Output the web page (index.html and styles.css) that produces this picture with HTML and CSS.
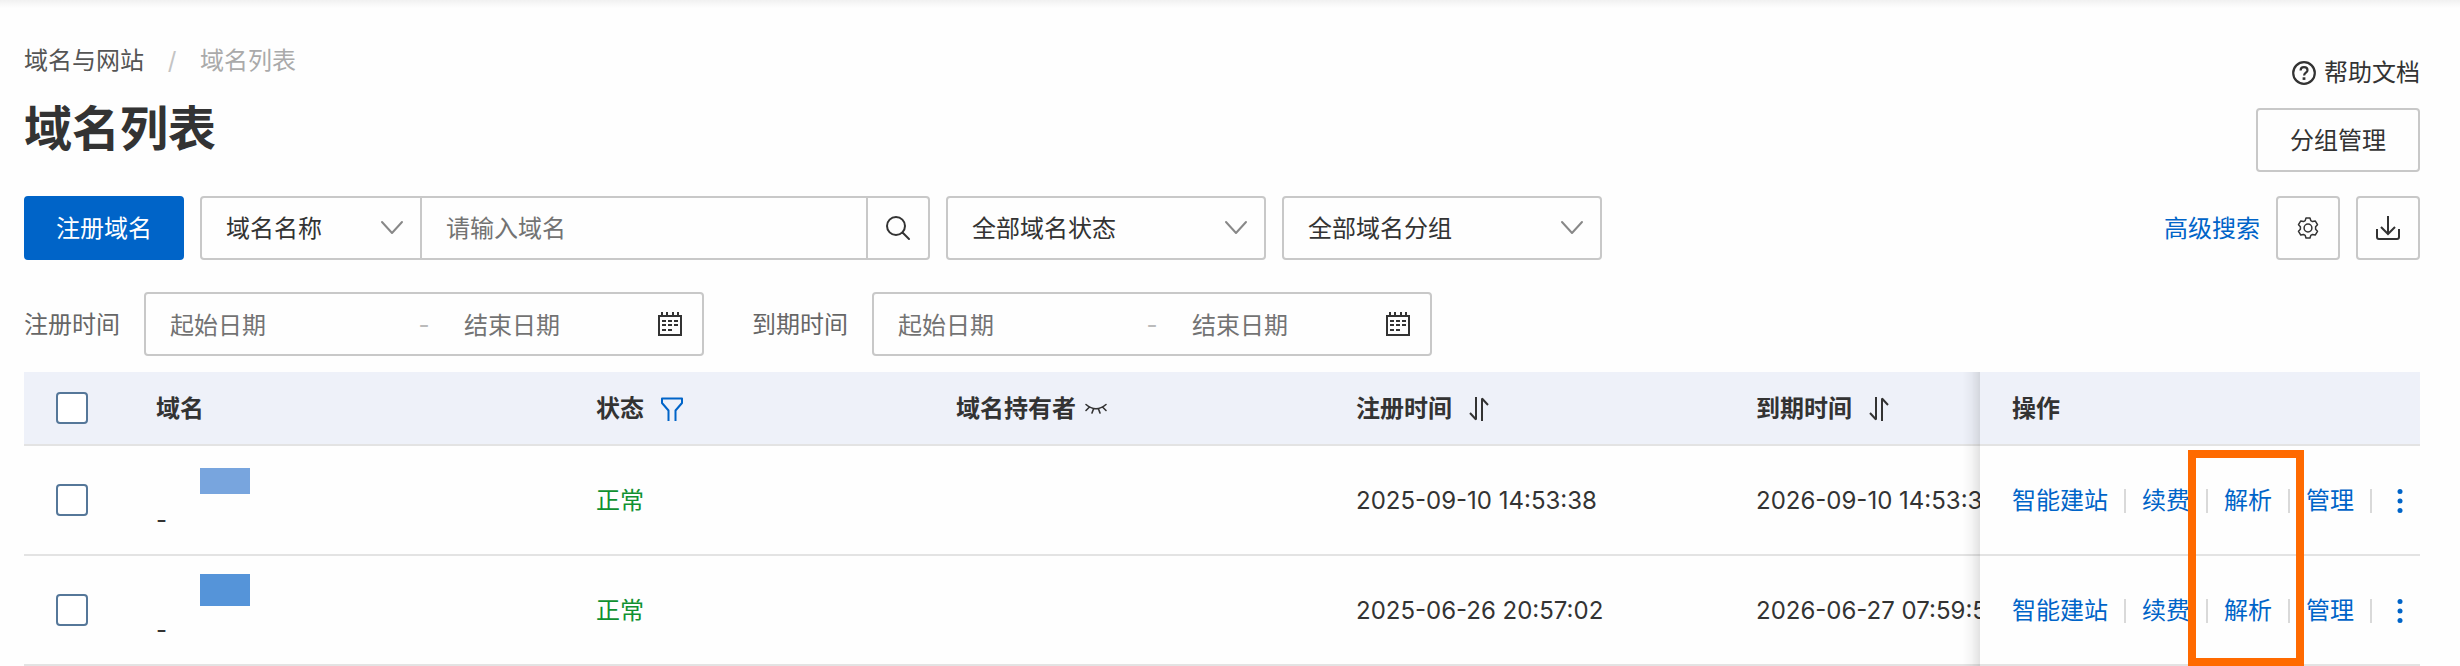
FILE: index.html
```html
<!DOCTYPE html>
<html lang="zh-CN">
<head>
    <meta charset="UTF-8">
    <meta name="viewport" content="width=device-width, initial-scale=1.0">
    <title>域名列表</title>
    <link rel="stylesheet" href="styles.css">
</head>
<body>
    <!-- Shared icons -->
    <svg class="icon-defs" aria-hidden="true">
        <symbol id="icon-arrow" viewBox="0 0 24 16">
            <path d="M2 2l10 11L22 2" fill="none" stroke="currentColor" stroke-width="2" stroke-linecap="round" stroke-linejoin="round"/>
        </symbol>
        <symbol id="icon-calendar" viewBox="0 0 24 24">
            <path d="M1 4h22v19H1zM4 0v4M9 0v4M15 0v4M20 0v4" fill="none" stroke="currentColor" stroke-width="2"/>
            <path d="M4 9h4M10 9h4M16 9h4M4 13h4M10 13h4M16 13h4M4 18h4M10 18h4" fill="none" stroke="currentColor" stroke-width="2"/>
        </symbol>
        <symbol id="icon-sort" viewBox="0 0 22 24">
            <path d="M8 0v22.500L2 16M14 24V1.500L20 8" fill="none" stroke="currentColor" stroke-width="2" stroke-linejoin="bevel"/>
        </symbol>
        <symbol id="icon-more" viewBox="0 0 24 24">
            <circle cx="12" cy="2.500" r="2.500" fill="currentColor"/>
            <circle cx="12" cy="12" r="2.500" fill="currentColor"/>
            <circle cx="12" cy="21.500" r="2.500" fill="currentColor"/>
        </symbol>
    </svg>

    <main class="page">
        <header class="page-header">
            <div>
                <nav class="breadcrumb">
                    <a href="#">域名与网站</a>
                    <span class="slash">/</span>
                    <span class="current">域名列表</span>
                </nav>
                <h1 class="title">域名列表</h1>
            </div>
            <div class="header-actions">
                <a class="help-link" href="#">
                    <svg width="24" height="24" viewBox="0 0 24 24" fill="none" stroke="currentColor" stroke-width="2.200">
                        <circle cx="12" cy="12" r="10.800"/>
                        <path d="M8.600 9.500C8.600 7.300 10 6.200 12 6.200s3.500 1.200 3.500 3c0 2.500-3.400 2.500-3.400 5.300"/>
                        <path d="M12 16.300v2.600" stroke-width="2.800"/>
                    </svg>
                    帮助文档
                </a>
                <button class="btn" type="button">分组管理</button>
            </div>
        </header>

        <form class="toolbar">
            <button class="btn btn-primary" type="button">注册域名</button>
            <div class="search-group">
                <div class="select-box search-type">
                    <select aria-label="搜索类型">
                        <option>域名名称</option>
                    </select>
                    <svg class="arrow"><use href="#icon-arrow"/></svg>
                </div>
                <input class="search-input" type="text" placeholder="请输入域名" aria-label="请输入域名">
                <button class="search-btn" type="button" aria-label="搜索">
                    <svg width="26" height="26" viewBox="0 0 26 26" fill="none" stroke="currentColor" stroke-width="2" stroke-linecap="round">
                        <circle cx="11" cy="11" r="9"/>
                        <path d="M17.500 17.500L24 24"/>
                    </svg>
                </button>
            </div>
            <div class="select-box filter-select">
                <select aria-label="域名状态">
                    <option>全部域名状态</option>
                </select>
                <svg class="arrow"><use href="#icon-arrow"/></svg>
            </div>
            <div class="select-box filter-select">
                <select aria-label="域名分组">
                    <option>全部域名分组</option>
                </select>
                <svg class="arrow"><use href="#icon-arrow"/></svg>
            </div>
            <div class="toolbar-right">
                <a class="link" href="#">高级搜索</a>
                <button class="btn btn-icon" type="button" aria-label="设置">
                    <svg width="22" height="22" viewBox="0 0 22 22" fill="none" stroke="currentColor" stroke-width="1.500" stroke-linejoin="round">
                        <circle cx="11" cy="11" r="3.900"/>
                        <path d="M9 1h4l.8 2.600 1.700 1 2.700-.7 2.300 3.800-1.900 2v2.600l1.900 2-2.300 3.800-2.700-.7-1.700 1L13 21H9l-.8-2.600-1.700-1-2.700.7-2.300-3.800 1.900-2V9.700l-1.900-2 2.300-3.800 2.700.7 1.700-1z"/>
                    </svg>
                </button>
                <button class="btn btn-icon" type="button" aria-label="下载">
                    <svg width="24" height="24" viewBox="0 0 24 24" fill="none" stroke="currentColor" stroke-width="2">
                        <path d="M12 0v18M5 11l7 7 7-7"/>
                        <path d="M1 13v8q0 2 2 2h18q2 0 2-2v-8"/>
                    </svg>
                </button>
            </div>
        </form>

        <div class="date-filters">
            <label for="reg-start">注册时间</label>
            <div class="date-range">
                <input id="reg-start" class="date-start" type="text" placeholder="起始日期">
                <span class="dash">-</span>
                <input class="date-end" type="text" placeholder="结束日期" aria-label="注册时间结束日期">
                <svg width="24" height="24"><use href="#icon-calendar"/></svg>
            </div>
            <label class="label-expire" for="exp-start">到期时间</label>
            <div class="date-range">
                <input id="exp-start" class="date-start" type="text" placeholder="起始日期">
                <span class="dash">-</span>
                <input class="date-end" type="text" placeholder="结束日期" aria-label="到期时间结束日期">
                <svg width="24" height="24"><use href="#icon-calendar"/></svg>
            </div>
        </div>

        <div class="table-wrap">
            <div class="table-scroll">
                <table class="domain-table">
                    <colgroup>
                        <col class="col-check">
                        <col class="col-domain">
                        <col class="col-status">
                        <col class="col-owner">
                        <col class="col-time">
                        <col class="col-time">
                        <col class="col-action">
                    </colgroup>
                    <thead>
                        <tr>
                            <th><input type="checkbox" class="checkbox" aria-label="全选"></th>
                            <th>域名</th>
                            <th>
                                <div class="th-content th-wide">状态
                                    <svg class="filter-icon" width="24" height="24" viewBox="0 0 24 24" fill="none" stroke="currentColor" stroke-width="2" stroke-linejoin="round">
                                        <path d="M8.500 24V13.500L2 6V1.500h20V6l-6.500 7.500V24"/>
                                    </svg>
                                </div>
                            </th>
                            <th>
                                <div class="th-content">域名持有者
                                    <svg width="24" height="12" viewBox="0 0 24 12" fill="none" stroke="currentColor" stroke-width="1.600" stroke-linecap="round">
                                        <path d="M2 1.500Q12 10 22 1.500M5 4.500L2 7.500M19 4.500l3 3M9.500 6l-1.500 4M14.500 6l1.500 4"/>
                                    </svg>
                                </div>
                            </th>
                            <th>
                                <div class="th-content th-wide">注册时间
                                    <svg width="22" height="24"><use href="#icon-sort"/></svg>
                                </div>
                            </th>
                            <th>
                                <div class="th-content th-wide">到期时间
                                    <svg width="22" height="24"><use href="#icon-sort"/></svg>
                                </div>
                            </th>
                            <th class="fixed-col">操作</th>
                        </tr>
                    </thead>
                    <tbody>
                        <tr>
                            <td><input type="checkbox" class="checkbox" aria-label="选择域名"></td>
                            <td>
                                <div class="domain-cell">
                                    <div class="mask mask-light"></div>
                                    <div>-</div>
                                </div>
                            </td>
                            <td class="status">正常</td>
                            <td></td>
                            <td>2025-09-10 14:53:38</td>
                            <td>2026-09-10 14:53:38</td>
                            <td class="fixed-col">
                                <div class="actions">
                                    <a class="link" href="#">智能建站</a>
                                    <a class="link" href="#">续费</a>
                                    <a class="link" href="#">解析</a>
                                    <a class="link" href="#">管理</a>
                                    <button class="more-btn" type="button" aria-label="更多"><svg width="24" height="24"><use href="#icon-more"/></svg></button>
                                </div>
                            </td>
                        </tr>
                        <tr>
                            <td><input type="checkbox" class="checkbox" aria-label="选择域名"></td>
                            <td>
                                <div class="domain-cell">
                                    <div class="mask"></div>
                                    <div>-</div>
                                </div>
                            </td>
                            <td class="status">正常</td>
                            <td></td>
                            <td>2025-06-26 20:57:02</td>
                            <td>2026-06-27 07:59:59</td>
                            <td class="fixed-col">
                                <div class="actions">
                                    <a class="link" href="#">智能建站</a>
                                    <a class="link" href="#">续费</a>
                                    <a class="link" href="#">解析</a>
                                    <a class="link" href="#">管理</a>
                                    <button class="more-btn" type="button" aria-label="更多"><svg width="24" height="24"><use href="#icon-more"/></svg></button>
                                </div>
                            </td>
                        </tr>
                    </tbody>
                </table>
            </div>
            <div class="highlight"></div>
        </div>
    </main>
</body>
</html>
```
FILE: styles.css
```css
* {
    margin: 0;
    padding: 0;
    box-sizing: border-box;
}

body {
    font-family: Inter, 'Noto Sans CJK SC', sans-serif;
    font-size: 24px;
    line-height: 36px;
    color: #333;
    background: #fefefe linear-gradient(#f1f1f1, #fefefe) no-repeat 0 0 / 100% 8px;
}

a {
    color: inherit;
    text-decoration: none;
}

svg {
    display: block;
    flex: none;
}

input,
select,
button {
    font: inherit;
    color: inherit;
    border: none;
    border-radius: 0;
    background: none;
    outline: none;
}

button {
    cursor: pointer;
}

input::placeholder {
    color: #737373;
    opacity: 1;
}

.icon-defs {
    position: absolute;
    width: 0;
    height: 0;
}

.page {
    padding: 43px 40px 0 24px;
}

/* Header */
.page-header {
    display: flex;
    justify-content: space-between;
    margin-bottom: 24px;
}

.breadcrumb {
    display: flex;
    margin-bottom: 18px;
    color: #555;
}

.breadcrumb .slash {
    width: 56px;
    text-align: center;
    color: #c4c4c4;
}

.breadcrumb .current {
    color: #aaa;
}

.title {
    font-size: 48px;
    line-height: 64px;
    font-weight: bold;
}

.header-actions {
    display: flex;
    flex-direction: column;
    align-items: flex-end;
    gap: 17px;
    padding-top: 12px;
}

.help-link {
    display: flex;
    align-items: center;
    gap: 8px;
}

/* Buttons and links */
.btn {
    height: 64px;
    padding: 2px 32px 0;
    border: 2px solid #c8c8c8;
    border-radius: 4px;
}

.btn-primary {
    padding: 2px 30px 0;
    color: #fff;
    background: #0064c8;
    border-color: #0064c8;
}

.btn-icon {
    display: flex;
    align-items: center;
    justify-content: center;
    width: 64px;
    padding: 0;
}

.link {
    color: #0064c8;
}

/* Toolbar */
.toolbar {
    display: flex;
    gap: 16px;
    margin-bottom: 32px;
}

.search-group,
.filter-select,
.date-range {
    display: flex;
    height: 64px;
    border: 2px solid #c8c8c8;
    border-radius: 4px;
}

.search-group {
    width: 730px;
}

.select-box {
    position: relative;
}

.select-box select {
    width: 100%;
    height: 100%;
    padding: 2px 56px 0 24px;
    appearance: none;
}

.select-box .arrow {
    position: absolute;
    top: 50%;
    right: 16px;
    width: 24px;
    height: 16px;
    margin-top: -8px;
    color: #888;
    pointer-events: none;
}

.search-type {
    width: 220px;
    border-right: 2px solid #c8c8c8;
}

.search-input {
    flex: 1;
    min-width: 0;
    padding: 2px 24px 0;
}

.search-btn {
    display: flex;
    align-items: center;
    justify-content: center;
    width: 62px;
    border-left: 2px solid #c8c8c8;
}

.filter-select {
    width: 320px;
}

.toolbar-right {
    display: flex;
    align-items: center;
    gap: 16px;
    margin-left: auto;
}

.toolbar-right .link {
    padding-top: 2px;
}

/* Date filters */
.date-filters {
    display: flex;
    align-items: center;
    margin-bottom: 16px;
}

.date-filters label {
    margin-right: 24px;
    padding-top: 2px;
    color: #666;
}

.date-filters .label-expire {
    margin-left: 48px;
}

.date-range {
    align-items: center;
    width: 560px;
    padding: 0 20px 0 24px;
}

.date-range input {
    height: 100%;
    min-width: 0;
    padding-top: 2px;
}

.date-start {
    width: 236px;
}

.date-end {
    flex: 1;
}

.dash {
    width: 36px;
    margin-right: 22px;
    padding-top: 2px;
    text-align: center;
    color: #bbb;
}

/* Table */
.table-wrap {
    position: relative;
}

.table-scroll {
    overflow-x: auto;
    scrollbar-width: none;
}

.domain-table {
    width: 100%;
    min-width: 2540px;
    table-layout: fixed;
    border-spacing: 0;
}

.col-check {
    width: 100px;
}

.col-status {
    width: 360px;
}

.col-owner,
.col-time {
    width: 400px;
}

.col-action {
    width: 440px;
}

.domain-table th,
.domain-table td {
    padding: 0 0 0 32px;
    border-bottom: 2px solid #e3e3e3;
    text-align: left;
    white-space: nowrap;
}

.domain-table th {
    height: 74px;
    font-weight: 600;
    background: #eef1f9;
}

.domain-table td {
    height: 110px;
    background: #fefefe;
}

.domain-table th + th,
.domain-table td + td {
    padding-top: 2px;
}

.th-content {
    display: flex;
    align-items: center;
    gap: 8px;
}

.th-wide {
    gap: 16px;
}

.filter-icon {
    color: #0064c8;
}

.checkbox {
    display: block;
    width: 32px;
    height: 32px;
    border: 2px solid #557799;
    border-radius: 4px;
    background: #fff;
    appearance: none;
}

.domain-cell {
    height: 74px;
    display: flex;
    flex-direction: column;
    justify-content: space-between;
}

.mask {
    width: 50px;
    height: 32px;
    margin-left: 44px;
    background: #5594d9;
}

.mask-light {
    height: 26px;
    margin-top: 4px;
    background: #78a5de;
}

.domain-table .status {
    color: #0f9130;
}

.domain-table .fixed-col {
    position: sticky;
    right: 0;
}

/* Shadow cast on the scrolled columns */
.fixed-col::before {
    content: "";
    position: absolute;
    top: 0;
    bottom: -2px;
    right: 100%;
    width: 18px;
    background: linear-gradient(to left, rgba(0, 0, 0, 0.11), rgba(0, 0, 0, 0.03) 50%, transparent);
}

.actions {
    display: flex;
    align-items: center;
}

.actions .link::after {
    content: "";
    display: inline-block;
    width: 2px;
    height: 24px;
    margin: 0 16px;
    vertical-align: -4px;
    background: #d9d9d9;
}

.more-btn {
    color: #0064c8;
}

.highlight {
    position: absolute;
    top: 78px;
    right: 116px;
    bottom: 0;
    width: 116px;
    border: 8px solid #ff6a00;
    pointer-events: none;
}
```
